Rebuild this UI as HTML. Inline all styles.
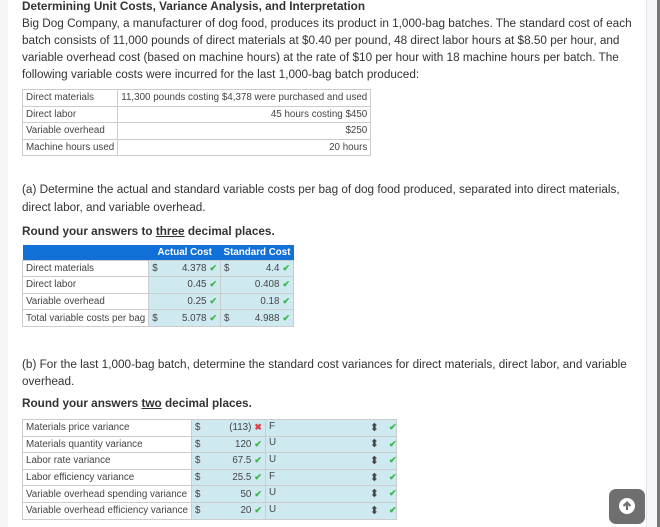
<!DOCTYPE html>
<html><head><meta charset="utf-8"><style>
*{margin:0;padding:0;box-sizing:border-box}
body{width:660px;height:527px;overflow:hidden;background:#fff;font-family:"Liberation Sans",sans-serif;color:#333;position:relative}
.lstrip{position:absolute;left:0;top:0;width:8px;height:527px;background:#f4f5f7}
.rline{position:absolute;left:646px;top:0;width:1px;height:527px;background:#e2e4e8}
.rbg{position:absolute;left:647px;top:0;width:10px;height:527px;background:#f6f7f9}
.rdark{position:absolute;left:657px;top:0;width:3px;height:527px;background:#777}
.t{position:absolute;left:22px;font-size:11.75px;line-height:17px;white-space:nowrap}
b{font-weight:bold}
table{position:absolute;border-collapse:collapse;font-size:9.8px}
td{border:1px solid #ccc;height:16.6px;padding:0 3px;white-space:nowrap;color:#444}
.r{text-align:right}
.bl{background:#cfe9f1}
.ck{color:#3bb54a;font-weight:bold;font-size:9px;margin-left:3px}
.x{color:#e0414a;font-weight:bold;font-size:9px;margin-left:3px}
.hd td{background:#1170d8;color:#fff;font-weight:bold;border:none;text-align:center;height:15px;font-size:9.8px}
.ud{float:right;font-size:11px;line-height:14px;color:#444;margin-right:14px}
.btn{position:absolute;left:609px;top:489px;width:36px;height:35px;border-radius:7px;background:#6f6f6f}
.btn div{position:absolute;left:10px;top:9px;width:16px;height:16px;border-radius:50%;background:#fff}
</style></head><body>
<div class="lstrip"></div><div class="rline"></div><div class="rbg"></div><div class="rdark"></div>
<div class="t" style="top:-2px"><b>Determining Unit Costs, Variance Analysis, and Interpretation</b></div>
<div class="t" style="top:15px">Big Dog Company, a manufacturer of dog food, produces its product in 1,000-bag batches. The standard cost of each</div>
<div class="t" style="top:32px">batch consists of 11,000 pounds of direct materials at $0.40 per pound, 48 direct labor hours at $8.50 per hour, and</div>
<div class="t" style="top:49px">variable overhead cost (based on machine hours) at the rate of $10 per hour with 18 machine hours per batch. The</div>
<div class="t" style="top:66px">following variable costs were incurred for the last 1,000-bag batch produced:</div>
<table style="left:22px;top:89px;width:347px">
<tr><td style="width:95px">Direct materials</td><td class="r">11,300 pounds costing $4,378 were purchased and used</td></tr>
<tr><td>Direct labor</td><td class="r">45 hours costing $450</td></tr>
<tr><td>Variable overhead</td><td class="r">$250</td></tr>
<tr><td>Machine hours used</td><td class="r">20 hours</td></tr>
</table>
<div class="t" style="top:181px">(a) Determine the actual and standard variable costs per bag of dog food produced, separated into direct materials,</div>
<div class="t" style="top:199px">direct labor, and variable overhead.</div>
<div class="t" style="top:223px"><b>Round your answers to <u>three</u> decimal places.</b></div>
<table style="left:22px;top:245px;width:272px">
<tr class="hd"><td style="width:125px;background:#1170d8"></td><td style="width:73px">Actual Cost</td><td>Standard Cost</td></tr>
<tr><td>Direct materials</td><td class="bl r"><span style="float:left">$</span>4.378<span class="ck">✔</span></td><td class="bl r"><span style="float:left">$</span>4.4<span class="ck">✔</span></td></tr>
<tr><td>Direct labor</td><td class="bl r">0.45<span class="ck">✔</span></td><td class="bl r">0.408<span class="ck">✔</span></td></tr>
<tr><td>Variable overhead</td><td class="bl r">0.25<span class="ck">✔</span></td><td class="bl r">0.18<span class="ck">✔</span></td></tr>
<tr><td>Total variable costs per bag</td><td class="bl r"><span style="float:left">$</span>5.078<span class="ck">✔</span></td><td class="bl r"><span style="float:left">$</span>4.988<span class="ck">✔</span></td></tr>
</table>
<div class="t" style="top:356px">(b) For the last 1,000-bag batch, determine the standard cost variances for direct materials, direct labor, and variable</div>
<div class="t" style="top:373px">overhead.</div>
<div class="t" style="top:395px"><b>Round your answers <u>two</u> decimal places.</b></div>
<table style="left:22px;top:419px;width:375px">
<tr><td style="width:168px">Materials price variance</td><td class="bl r" style="width:74px"><span style="float:left">$</span>(113)<span class="x">✖</span></td><td class="bl">F<span class="ud">⬍</span></td></tr>
<tr><td>Materials quantity variance</td><td class="bl r"><span style="float:left">$</span>120<span class="ck">✔</span></td><td class="bl">U<span class="ud">⬍</span></td></tr>
<tr><td>Labor rate variance</td><td class="bl r"><span style="float:left">$</span>67.5<span class="ck">✔</span></td><td class="bl">U<span class="ud">⬍</span></td></tr>
<tr><td>Labor efficiency variance</td><td class="bl r"><span style="float:left">$</span>25.5<span class="ck">✔</span></td><td class="bl">F<span class="ud">⬍</span></td></tr>
<tr><td>Variable overhead spending variance</td><td class="bl r"><span style="float:left">$</span>50<span class="ck">✔</span></td><td class="bl">U<span class="ud">⬍</span></td></tr>
<tr><td>Variable overhead efficiency variance</td><td class="bl r"><span style="float:left">$</span>20<span class="ck">✔</span></td><td class="bl">U<span class="ud">⬍</span></td></tr>
</table>
<div style="position:absolute;left:389px;top:419px;font-size:9px;color:#3bb54a;font-weight:bold;line-height:16.6px">✔<br>✔<br>✔<br>✔<br>✔<br>✔</div>
<div class="btn"><div><svg width="16" height="16" viewBox="0 0 16 16" style="position:absolute;left:0;top:0"><path d="M8 12V5M4.5 8L8 4.5 11.5 8" stroke="#6f6f6f" stroke-width="2.2" fill="none"/></svg></div></div>
</body></html>
